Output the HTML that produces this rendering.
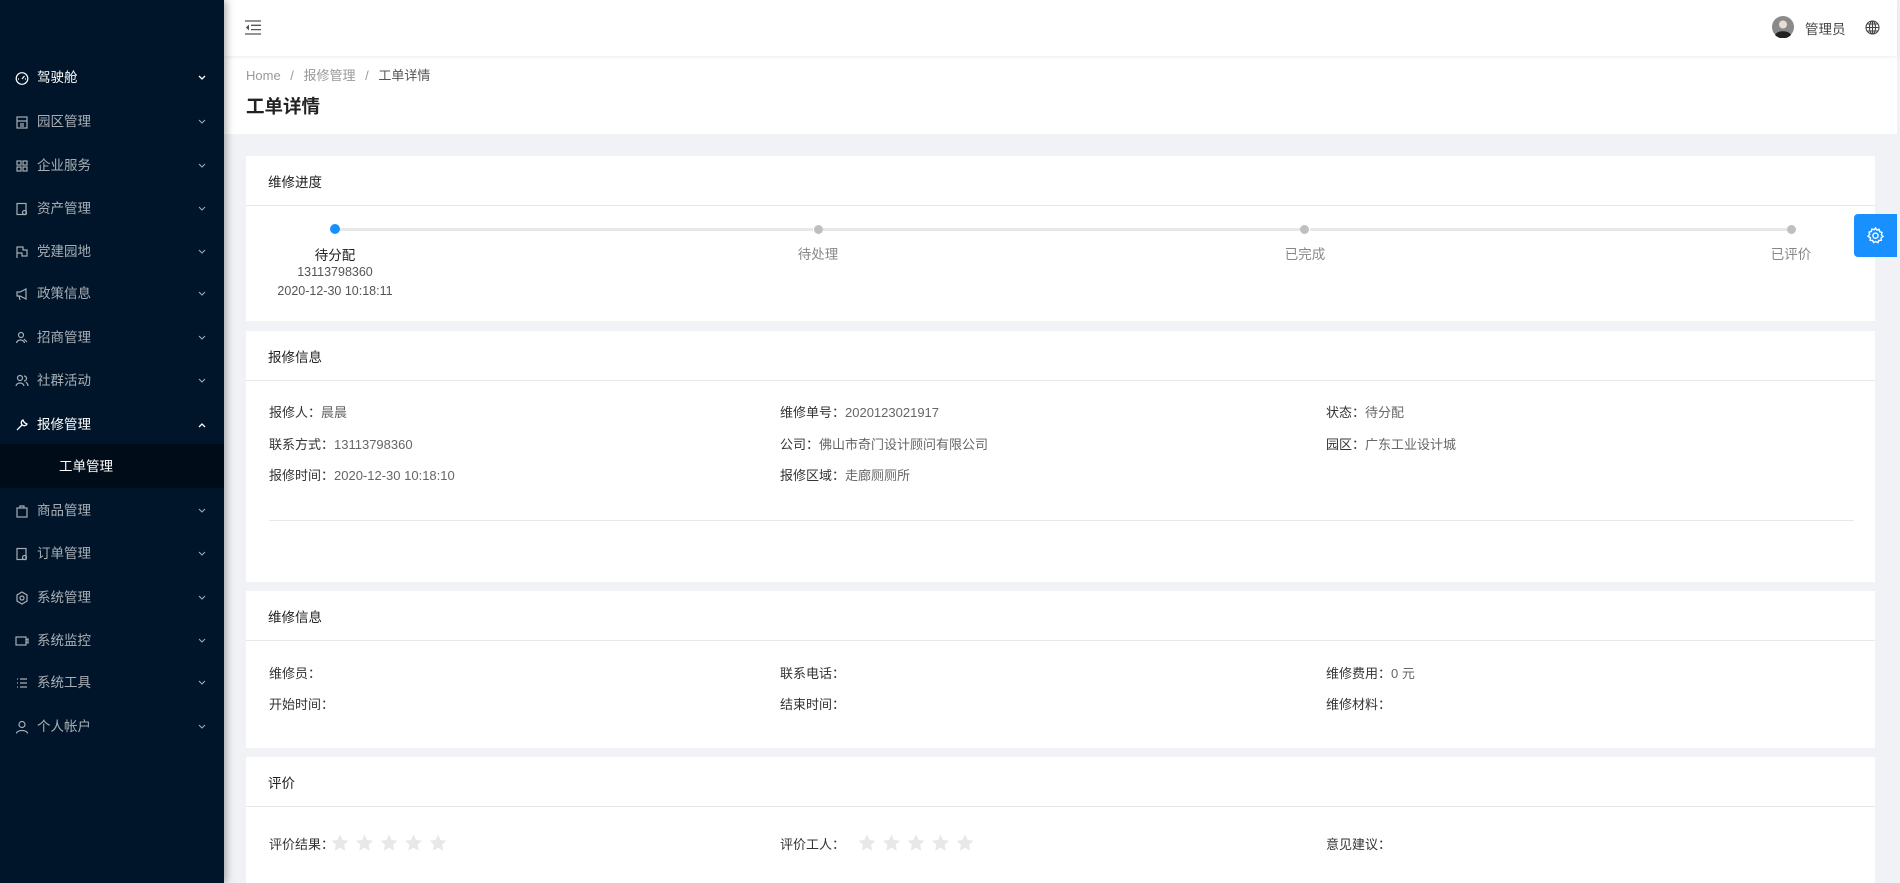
<!DOCTYPE html>
<html><head><meta charset="utf-8">
<style>
*{margin:0;padding:0;box-sizing:border-box}
body{width:1900px;height:883px;overflow:hidden;background:#f0f2f5;font-family:"Liberation Sans","Noto Sans CJK SC",sans-serif;position:relative;color:#333}
.abs{position:absolute}
#side{left:0;top:0;width:224px;height:883px;background:#001529;box-shadow:2px 0 8px rgba(0,0,0,.35);z-index:3}
.mi{position:absolute;left:0;width:224px;height:44px;line-height:48px;color:rgba(255,255,255,.65);font-size:13.5px}
.mi svg.ic{position:absolute;left:15px;top:17px}
.mi .t{position:absolute;left:37px}
.mi .ar{position:absolute;left:198px;top:21px}
#hdr{left:224px;top:0;width:1673px;height:56px;background:#fff;box-shadow:0 1px 4px rgba(0,21,41,.08);z-index:2}
#ph{left:224px;top:56px;width:1673px;height:78px;background:#fff}
.card{position:absolute;left:246px;width:1629px;background:#fff}
.ch{height:50px;line-height:54px;padding-left:22px;font-size:13.5px;color:#222;border-bottom:1px solid #e8e8e8}
.row{position:absolute;font-size:13px;color:#333;white-space:nowrap}
.row span{color:#666}
.dot{position:absolute;width:9px;height:9px;border-radius:50%;background:#bfbfbf;top:225px}
.ln{position:absolute;height:3px;background:#e8e8e8;top:228px}
.sl{position:absolute;font-size:13.5px;color:#888;text-align:center;width:120px}
</style></head><body>
<div id="side" class="abs">
 <div class="mi" style="top:54px;color:#fff"><svg class="ic" width="14" height="14" viewBox="0 0 14 14" fill="none" stroke="#fff" stroke-width="1.2"><circle cx="7" cy="7.5" r="5.8"/><path d="M7 8l2.5-3M3 8h1M10 8h1"/></svg><span class="t">驾驶舱</span><svg class="ar" width="8" height="6" viewBox="0 0 8 6"><path d="M1 1l3 3 3-3" stroke="#fff" fill="none" stroke-width="1.3"/></svg></div>
 <div class="mi" style="top:98px"><svg class="ic" width="14" height="14" viewBox="0 0 14 14" fill="none" stroke="#a6adb4" stroke-width="1.2"><rect x="2" y="2" width="10" height="11"/><path d="M2 6h10M5 9h4M5 11h4"/></svg><span class="t">园区管理</span><svg class="ar" width="8" height="6" viewBox="0 0 8 6"><path d="M1 1l3 3 3-3" stroke="#a6adb4" fill="none"/></svg></div>
 <div class="mi" style="top:142px"><svg class="ic" width="14" height="14" viewBox="0 0 14 14" fill="none" stroke="#a6adb4" stroke-width="1.2"><rect x="2" y="2" width="4" height="4"/><rect x="8" y="2" width="4" height="4"/><rect x="2" y="8" width="4" height="4"/><rect x="8" y="8" width="4" height="4"/></svg><span class="t">企业服务</span><svg class="ar" width="8" height="6" viewBox="0 0 8 6"><path d="M1 1l3 3 3-3" stroke="#a6adb4" fill="none"/></svg></div>
 <div class="mi" style="top:185px"><svg class="ic" width="14" height="14" viewBox="0 0 14 14" fill="none" stroke="#a6adb4" stroke-width="1.2"><rect x="2" y="1.5" width="9" height="11"/><circle cx="9.5" cy="10.5" r="2"/></svg><span class="t">资产管理</span><svg class="ar" width="8" height="6" viewBox="0 0 8 6"><path d="M1 1l3 3 3-3" stroke="#a6adb4" fill="none"/></svg></div>
 <div class="mi" style="top:228px"><svg class="ic" width="14" height="14" viewBox="0 0 14 14" fill="none" stroke="#a6adb4" stroke-width="1.2"><path d="M2 13V2h6v3h4v6H7V8H2"/></svg><span class="t">党建园地</span><svg class="ar" width="8" height="6" viewBox="0 0 8 6"><path d="M1 1l3 3 3-3" stroke="#a6adb4" fill="none"/></svg></div>
 <div class="mi" style="top:270px"><svg class="ic" width="14" height="14" viewBox="0 0 14 14" fill="none" stroke="#a6adb4" stroke-width="1.2"><path d="M2 5h3l6-3v10l-6-3H2zM4 9l1 4"/></svg><span class="t">政策信息</span><svg class="ar" width="8" height="6" viewBox="0 0 8 6"><path d="M1 1l3 3 3-3" stroke="#a6adb4" fill="none"/></svg></div>
 <div class="mi" style="top:314px"><svg class="ic" width="14" height="14" viewBox="0 0 14 14" fill="none" stroke="#a6adb4" stroke-width="1.2"><circle cx="6" cy="4" r="2.5"/><path d="M1.5 12c1-4 7-4 8 0M9 8l3 3"/></svg><span class="t">招商管理</span><svg class="ar" width="8" height="6" viewBox="0 0 8 6"><path d="M1 1l3 3 3-3" stroke="#a6adb4" fill="none"/></svg></div>
 <div class="mi" style="top:357px"><svg class="ic" width="14" height="14" viewBox="0 0 14 14" fill="none" stroke="#a6adb4" stroke-width="1.2"><circle cx="5" cy="4" r="2.5"/><path d="M1 12c1-4 7-4 8 0M9 2a2.5 2.5 0 010 5M11 8c1 1 2 2 2 4"/></svg><span class="t">社群活动</span><svg class="ar" width="8" height="6" viewBox="0 0 8 6"><path d="M1 1l3 3 3-3" stroke="#a6adb4" fill="none"/></svg></div>
 <div class="mi" style="top:401px;color:#fff"><svg class="ic" width="14" height="14" viewBox="0 0 14 14" fill="none" stroke="#fff" stroke-width="1.3"><path d="M2 12l5-5M8 2a3 3 0 104 4L10 5 9 4z"/></svg><span class="t">报修管理</span><svg class="ar" width="8" height="6" viewBox="0 0 8 6"><path d="M1 5l3-3 3 3" stroke="#fff" fill="none" stroke-width="1.3"/></svg></div>
 <div class="abs" style="left:0;top:444px;width:224px;height:44px;background:#000c17;color:#fff;font-size:13.5px;line-height:46px;padding-left:59px">工单管理</div>
 <div class="mi" style="top:487px"><svg class="ic" width="14" height="14" viewBox="0 0 14 14" fill="none" stroke="#a6adb4" stroke-width="1.2"><rect x="2" y="4" width="10" height="9"/><path d="M5 4V2h4v2"/></svg><span class="t">商品管理</span><svg class="ar" width="8" height="6" viewBox="0 0 8 6"><path d="M1 1l3 3 3-3" stroke="#a6adb4" fill="none"/></svg></div>
 <div class="mi" style="top:530px"><svg class="ic" width="14" height="14" viewBox="0 0 14 14" fill="none" stroke="#a6adb4" stroke-width="1.2"><rect x="2" y="1.5" width="9" height="11"/><circle cx="9.5" cy="10.5" r="2"/></svg><span class="t">订单管理</span><svg class="ar" width="8" height="6" viewBox="0 0 8 6"><path d="M1 1l3 3 3-3" stroke="#a6adb4" fill="none"/></svg></div>
 <div class="mi" style="top:574px"><svg class="ic" width="14" height="14" viewBox="0 0 14 14" fill="none" stroke="#a6adb4" stroke-width="1.2"><path d="M7 1l5 3v6l-5 3-5-3V4z"/><circle cx="7" cy="7" r="2"/></svg><span class="t">系统管理</span><svg class="ar" width="8" height="6" viewBox="0 0 8 6"><path d="M1 1l3 3 3-3" stroke="#a6adb4" fill="none"/></svg></div>
 <div class="mi" style="top:617px"><svg class="ic" width="14" height="14" viewBox="0 0 14 14" fill="none" stroke="#a6adb4" stroke-width="1.2"><rect x="1" y="3" width="10" height="8"/><path d="M11 6l2-1v4l-2-1"/></svg><span class="t">系统监控</span><svg class="ar" width="8" height="6" viewBox="0 0 8 6"><path d="M1 1l3 3 3-3" stroke="#a6adb4" fill="none"/></svg></div>
 <div class="mi" style="top:659px"><svg class="ic" width="14" height="14" viewBox="0 0 14 14" fill="none" stroke="#a6adb4" stroke-width="1.2"><path d="M2 3h1M5 3h7M2 7h1M5 7h7M2 11h1M5 11h7"/></svg><span class="t">系统工具</span><svg class="ar" width="8" height="6" viewBox="0 0 8 6"><path d="M1 1l3 3 3-3" stroke="#a6adb4" fill="none"/></svg></div>
 <div class="mi" style="top:703px"><svg class="ic" width="14" height="14" viewBox="0 0 14 14" fill="none" stroke="#a6adb4" stroke-width="1.2"><circle cx="7" cy="4.5" r="3"/><path d="M1.5 13.5c0-4 11-4 11 0"/></svg><span class="t">个人帐户</span><svg class="ar" width="8" height="6" viewBox="0 0 8 6"><path d="M1 1l3 3 3-3" stroke="#a6adb4" fill="none"/></svg></div>
</div>

<div id="hdr" class="abs">
 <svg class="abs" style="left:21px;top:20px" width="17" height="15" viewBox="0 0 17 15" fill="none" stroke="#555" stroke-width="1.3"><path d="M0 1h16M6 5.3h10M6 9.6h10M0 14h16"/><path d="M4 4.5v6L0.8 7.5z" fill="#555" stroke="none"/></svg>
 <svg class="abs" style="left:1548px;top:16px" width="22" height="22" viewBox="0 0 22 22"><circle cx="11" cy="11" r="11" fill="#8a8a8a"/><circle cx="11" cy="8.5" r="4" fill="#e8ddd3"/><path d="M3 19c2-5 14-5 16 0a11 11 0 01-16 0z" fill="#222"/></svg>
 <div class="abs" style="left:1581px;top:18px;font-size:13.5px;color:#444">管理员</div>
 <svg class="abs" style="left:1641px;top:20px" width="15" height="15" viewBox="0 0 15 15" fill="none" stroke="#444" stroke-width="1.1"><circle cx="7.5" cy="7.5" r="6.5"/><ellipse cx="7.5" cy="7.5" rx="3" ry="6.5"/><path d="M1 7.5h13M7.5 1v13M2 4h11M2 11h11"/></svg>
</div>
<div class="abs" style="left:1897px;top:0;width:3px;height:883px;background:#f0f2f5"></div>
<div id="ph" class="abs">
 <div class="abs" style="left:22px;top:9px;font-size:13px;color:#999">Home <span style="margin:0 6px">/</span> 报修管理 <span style="margin:0 6px">/</span> <span style="color:#555">工单详情</span></div>
 <div class="abs" style="left:22px;top:37px;font-size:18.5px;font-weight:bold;color:#222">工单详情</div>
</div>

<div class="card" style="top:156px;height:165px">
 <div class="ch">维修进度</div>
</div>
<div class="ln" style="left:340px;width:473px"></div>
<div class="ln" style="left:823px;width:477px"></div>
<div class="ln" style="left:1310px;width:477px"></div>
<div class="dot" style="left:330px;background:#1890ff;width:10px;height:10px;top:224px"></div>
<div class="dot" style="left:814px"></div>
<div class="dot" style="left:1300px"></div>
<div class="dot" style="left:1787px"></div>
<div class="sl" style="left:275px;top:244px;color:#222">待分配</div>
<div class="sl" style="left:275px;top:265px;font-size:12.5px;color:#555">13113798360</div>
<div class="sl" style="left:255px;top:284px;width:160px;font-size:12.5px;color:#555">2020-12-30 10:18:11</div>
<div class="sl" style="left:758px;top:243px">待处理</div>
<div class="sl" style="left:1245px;top:243px">已完成</div>
<div class="sl" style="left:1731px;top:243px">已评价</div>

<div class="card" style="top:331px;height:251px"><div class="ch">报修信息</div>
 <div class="abs" style="left:23px;top:189px;width:1585px;height:1px;background:#e8e8e8"></div>
</div>
<div class="row" style="left:269px;top:402px">报修人：<span>晨晨</span></div>
<div class="row" style="left:269px;top:434px">联系方式：<span>13113798360</span></div>
<div class="row" style="left:269px;top:465px">报修时间：<span>2020-12-30 10:18:10</span></div>
<div class="row" style="left:780px;top:402px">维修单号：<span>2020123021917</span></div>
<div class="row" style="left:780px;top:434px">公司：<span>佛山市奇门设计顾问有限公司</span></div>
<div class="row" style="left:780px;top:465px">报修区域：<span>走廊厕厕所</span></div>
<div class="row" style="left:1326px;top:402px">状态：<span>待分配</span></div>
<div class="row" style="left:1326px;top:434px">园区：<span>广东工业设计城</span></div>

<div class="card" style="top:591px;height:157px"><div class="ch">维修信息</div></div>
<div class="row" style="left:269px;top:663px">维修员：</div>
<div class="row" style="left:269px;top:694px">开始时间：</div>
<div class="row" style="left:780px;top:663px">联系电话：</div>
<div class="row" style="left:780px;top:694px">结束时间：</div>
<div class="row" style="left:1326px;top:663px">维修费用：<span>0 元</span></div>
<div class="row" style="left:1326px;top:694px">维修材料：</div>

<div class="card" style="top:757px;height:126px"><div class="ch">评价</div></div>
<div class="row" style="left:269px;top:834px">评价结果：</div>
<div class="row" style="left:780px;top:834px">评价工人：</div>
<div class="row" style="left:1326px;top:834px">意见建议：</div>
<svg class="abs" style="left:331px;top:834px" width="120" height="18" viewBox="0 0 120 18" fill="#e8e8e8">
 <g id="s"><path d="M9 0.5l2.6 5.5 5.9.7-4.4 4.1 1.2 5.9L9 13.8 3.7 16.7l1.2-5.9L.5 6.7l5.9-.7z"/></g>
 <use href="#s" x="24.5"/><use href="#s" x="49"/><use href="#s" x="73.5"/><use href="#s" x="98"/>
</svg>
<svg class="abs" style="left:858px;top:834px" width="120" height="18" viewBox="0 0 120 18" fill="#e8e8e8">
 <g id="s2"><path d="M9 0.5l2.6 5.5 5.9.7-4.4 4.1 1.2 5.9L9 13.8 3.7 16.7l1.2-5.9L.5 6.7l5.9-.7z"/></g>
 <use href="#s2" x="24.5"/><use href="#s2" x="49"/><use href="#s2" x="73.5"/><use href="#s2" x="98"/>
</svg>

<div class="abs" style="left:1854px;top:214px;width:43px;height:43px;background:#1890ff;border-radius:4px 0 0 4px">
 <svg class="abs" style="left:13px;top:13px" width="17" height="17" viewBox="0 0 17 17" fill="none" stroke="#fff" stroke-width="1.4"><path d="M8.5 1l1.3 2 2.3-.6.6 2.3 2.3.8-.6 2.3 1.6 1.7-1.9 1.4.2 2.4-2.4.1-1 2.2-2.1-1.1-2.2 1.1-1-2.2-2.4-.1.2-2.4L1 9.2l1.6-1.7L2 5.2l2.3-.8.6-2.3 2.3.6z"/><circle cx="8.5" cy="8.7" r="2.6"/></svg>
</div>
</body></html>
